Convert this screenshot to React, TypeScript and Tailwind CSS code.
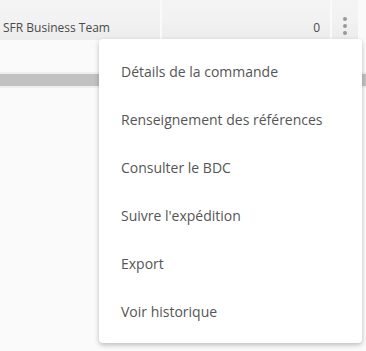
const items = [
  "Détails de la commande",
  "Renseignement des références",
  "Consulter le BDC",
  "Suivre l'expédition",
  "Export",
  "Voir historique",
];

export default function App() {
  return (
    <div
      className="relative h-[351px] w-[366px] overflow-hidden bg-[#fafafa] text-[#4a4a4a]"
      style={{ fontFamily: '"Open Sans", sans-serif' }}
    >
      <div className="flex h-[40px] bg-gradient-to-b from-[#f4f4f4] via-[#f2f2f2] to-[#ececec]">
        <div className="flex w-[160px] items-center pl-[3px] pt-[16px] text-[12px]">SFR Business Team</div>
        <div className="w-[2px] bg-[#fafafa]" />
        <div className="flex w-[168px] items-center justify-end pr-[10px] pt-[16px] text-[12px]">0</div>
        <div className="w-[2px] bg-[#fafafa]" />
        <div className="flex w-[26px] flex-col items-center justify-center gap-[3px] pt-[12px]">
          <span className="h-[4px] w-[4px] rounded-full bg-[#999]" />
          <span className="h-[4px] w-[4px] rounded-full bg-[#999]" />
          <span className="h-[4px] w-[4px] rounded-full bg-[#999]" />
        </div>
        <div className="flex-1 bg-[#fafafa]" />
      </div>
      <div className="mt-[32px] h-[2px] bg-[#f0f0f0]" />
      <div className="h-[12px] bg-[#c2c2c2]" />
      <div className="h-[2px] bg-[#f0f0f0]" />

      <div className="absolute left-[99px] top-[39px] w-[263px] rounded-[4px] bg-white py-2 text-[#555] shadow-[0_2px_5px_rgba(0,0,0,0.25)]">
        {items.map((label) => (
          <div key={label} className="flex h-12 items-center px-[22px] text-[14px]">
            {label}
          </div>
        ))}
      </div>
    </div>
  );
}
